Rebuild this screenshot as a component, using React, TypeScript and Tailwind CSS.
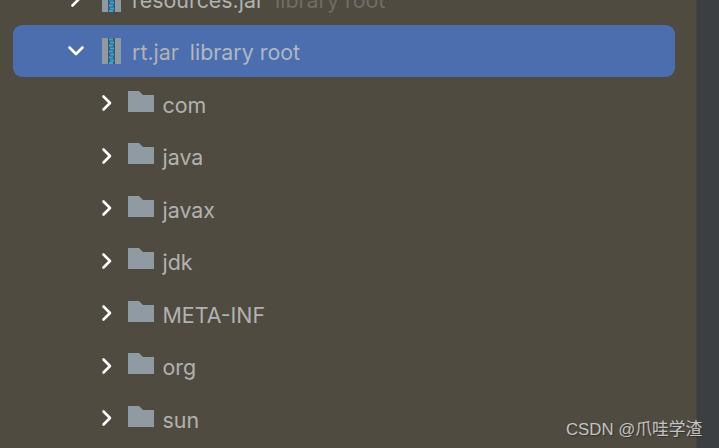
const Chevron = ({ down }: { down?: boolean }) => (
  <svg width="18" height="18" viewBox="0 0 18 18" fill="none" className="shrink-0">
    <path
      d={down ? "M2.5 5.5 L9 12 L15.5 5.5" : "M5.5 2.5 L12 9 L5.5 15.5"}
      stroke="#ffffff"
      strokeWidth="2.6"
      strokeLinecap="round"
      strokeLinejoin="round"
    />
  </svg>
);

const Jar = () => (
  <svg width="19" height="26" viewBox="0 0 19 26" className="shrink-0">
    <rect x="0" y="0" width="6" height="26" fill="#8e9aa3" />
    <rect x="13" y="0" width="6" height="26" fill="#8e9aa3" />
    <rect x="6" y="0" width="7" height="26" fill="#44586f" />
    <path
      d="M7 1.5 H11 M8 4.5 H12 M7 7.5 H11 M8 10.5 H12 M7 13.5 H11 M8 16.5 H12 M7 19.5 H11 M8 22.5 H12 M7 25 H11"
      stroke="#2ea9df"
      strokeWidth="2.2"
      fill="none"
    />
  </svg>
);

const Folder = () => (
  <svg width="26" height="21" viewBox="0 0 26 21" className="shrink-0">
    <path d="M0 0 H11 L15 4 H26 V21 H0 Z" fill="#8f9aa2" />
  </svg>
);

const folders = ["com", "java", "javax", "jdk", "META-INF", "org", "sun"];

export default function App() {
  return (
    <div className="flex h-[448px] w-[719px] overflow-hidden bg-[#504b40] font-['Inter','Noto_Sans',sans-serif] text-[21.4px] text-[#b0b2b2]">
      <div className="relative flex-1 overflow-hidden border-r border-[#46433a]">
        <div className="-mt-[27px] flex h-[52px] items-center pl-[67px]">
          <Chevron />
          <span className="ml-[17px] flex"><Jar /></span>
          <span className="ml-[11px] pt-[3px]">resources.jar</span>
          <span className="ml-[11px] pt-[3px] text-[#6f6d66]">library root</span>
        </div>
        <div className="ml-[13px] flex h-[52px] w-[662px] items-center rounded-[9px] bg-[#4c6eae] pl-[54px]">
          <Chevron down />
          <span className="ml-[17px] flex"><Jar /></span>
          <span className="ml-[11px] pt-[3px]">rt.jar</span>
          <span className="ml-[11px] pt-[3px] text-[#adb7c6]">library root</span>
        </div>
        {folders.map((name) => (
          <div key={name} className="flex h-[52.5px] items-center pl-[98px]">
            <Chevron />
            <span className="ml-[12px] -mt-[4px] flex"><Folder /></span>
            <span className="ml-[8.5px] pt-[3px]">{name}</span>
          </div>
        ))}
      </div>
      <div className="w-[22px] shrink-0 bg-[#3c3f41]" />
      <div className="absolute left-[566px] top-[419px] font-['Liberation_Sans','Noto_Sans_CJK_SC',sans-serif] text-[16.8px] leading-[22px] text-[#c4c4c2] [text-shadow:1px_1px_1px_#333]">
        CSDN @爪哇学渣
      </div>
    </div>
  );
}
